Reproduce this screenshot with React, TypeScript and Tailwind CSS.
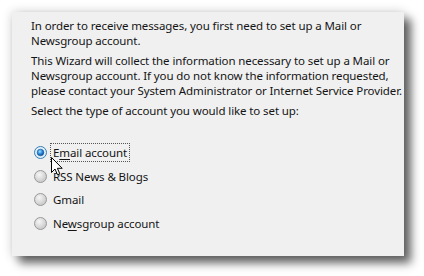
import React from "react";

const font = { fontFamily: '"Segoe UI", "Noto Sans", "Open Sans", sans-serif' };

function Radio({ checked }: { checked?: boolean }) {
  return (
    <svg width="13" height="13" viewBox="0 0 13 13" className="shrink-0">
      <defs>
        <radialGradient id="off" cx="40%" cy="35%" r="70%">
          <stop offset="0%" stopColor="#f6f6f6" />
          <stop offset="100%" stopColor="#c4c4c4" />
        </radialGradient>
        <radialGradient id="dot" cx="40%" cy="35%" r="65%">
          <stop offset="0%" stopColor="#9fe0ff" />
          <stop offset="55%" stopColor="#2a8ae0" />
          <stop offset="100%" stopColor="#0f4f9a" />
        </radialGradient>
      </defs>
      <circle cx="6.5" cy="6.5" r="6" fill={checked ? "#dceefa" : "url(#off)"} stroke={checked ? "#3c7fb1" : "#9a9a9a"} strokeWidth="1" />
      {checked && <circle cx="6.5" cy="6.5" r="3.3" fill="url(#dot)" stroke="#174f8a" strokeWidth="0.6" />}
    </svg>
  );
}

function Cursor() {
  return (
    <svg width="12" height="19" viewBox="0 0 12 19" className="absolute left-[51px] top-[157px]">
      <path d="M0.5 0.5 L0.5 15.5 L4 12 L6.5 17.8 L8.8 16.8 L6.4 11.3 L11.2 11.3 Z" fill="#fff" stroke="#000" strokeWidth="1" strokeLinejoin="miter" />
    </svg>
  );
}

export default function App() {
  const options: { label: React.ReactNode; checked?: boolean }[] = [
    {
      label: (
        <span className="outline-1 outline-dotted outline-[#555] px-[2px] -mx-[2px] py-[1px]">
          E<span className="underline underline-offset-2">m</span>ail account
        </span>
      ),
      checked: true,
    },
    { label: "RSS News & Blogs" },
    { label: "Gmail" },
    {
      label: (
        <>
          Ne<span className="underline underline-offset-2">w</span>sgroup account
        </>
      ),
    },
  ];

  return (
    <div className="relative w-[424px] h-[276px] bg-white overflow-hidden" style={font}>
      <div className="absolute left-[12px] top-[12px] w-[392px] h-[244px] bg-[#f0f0f0] shadow-[7px_7px_9px_rgba(0,0,0,0.6),0_0_10px_rgba(0,0,0,0.18)]">
        <div className="pl-[19px] pt-[6px] text-[11.5px] tracking-[-0.1px] leading-[15px] text-[#141414] whitespace-nowrap flex flex-col gap-[5px]">
          <p>
            In order to receive messages, you first need to set up a Mail or
            <br />
            Newsgroup account.
          </p>
          <p>
            This Wizard will collect the information necessary to set up a Mail or
            <br />
            Newsgroup account. If you do not know the information requested,
            <br />
            please contact your System Administrator or Internet Service Provider.
          </p>
          <p>Select the type of account you would like to set up:</p>
        </div>
        <div className="mt-[23px] pl-[22px] flex flex-col text-[11.5px] tracking-[-0.1px] text-[#141414]">
          {options.map((o, i) => (
            <div key={i} className="flex items-center gap-[6px] h-[23.5px]">
              <Radio checked={o.checked} />
              <span className="leading-[15px]">{o.label}</span>
            </div>
          ))}
        </div>
      </div>
      <Cursor />
    </div>
  );
}
